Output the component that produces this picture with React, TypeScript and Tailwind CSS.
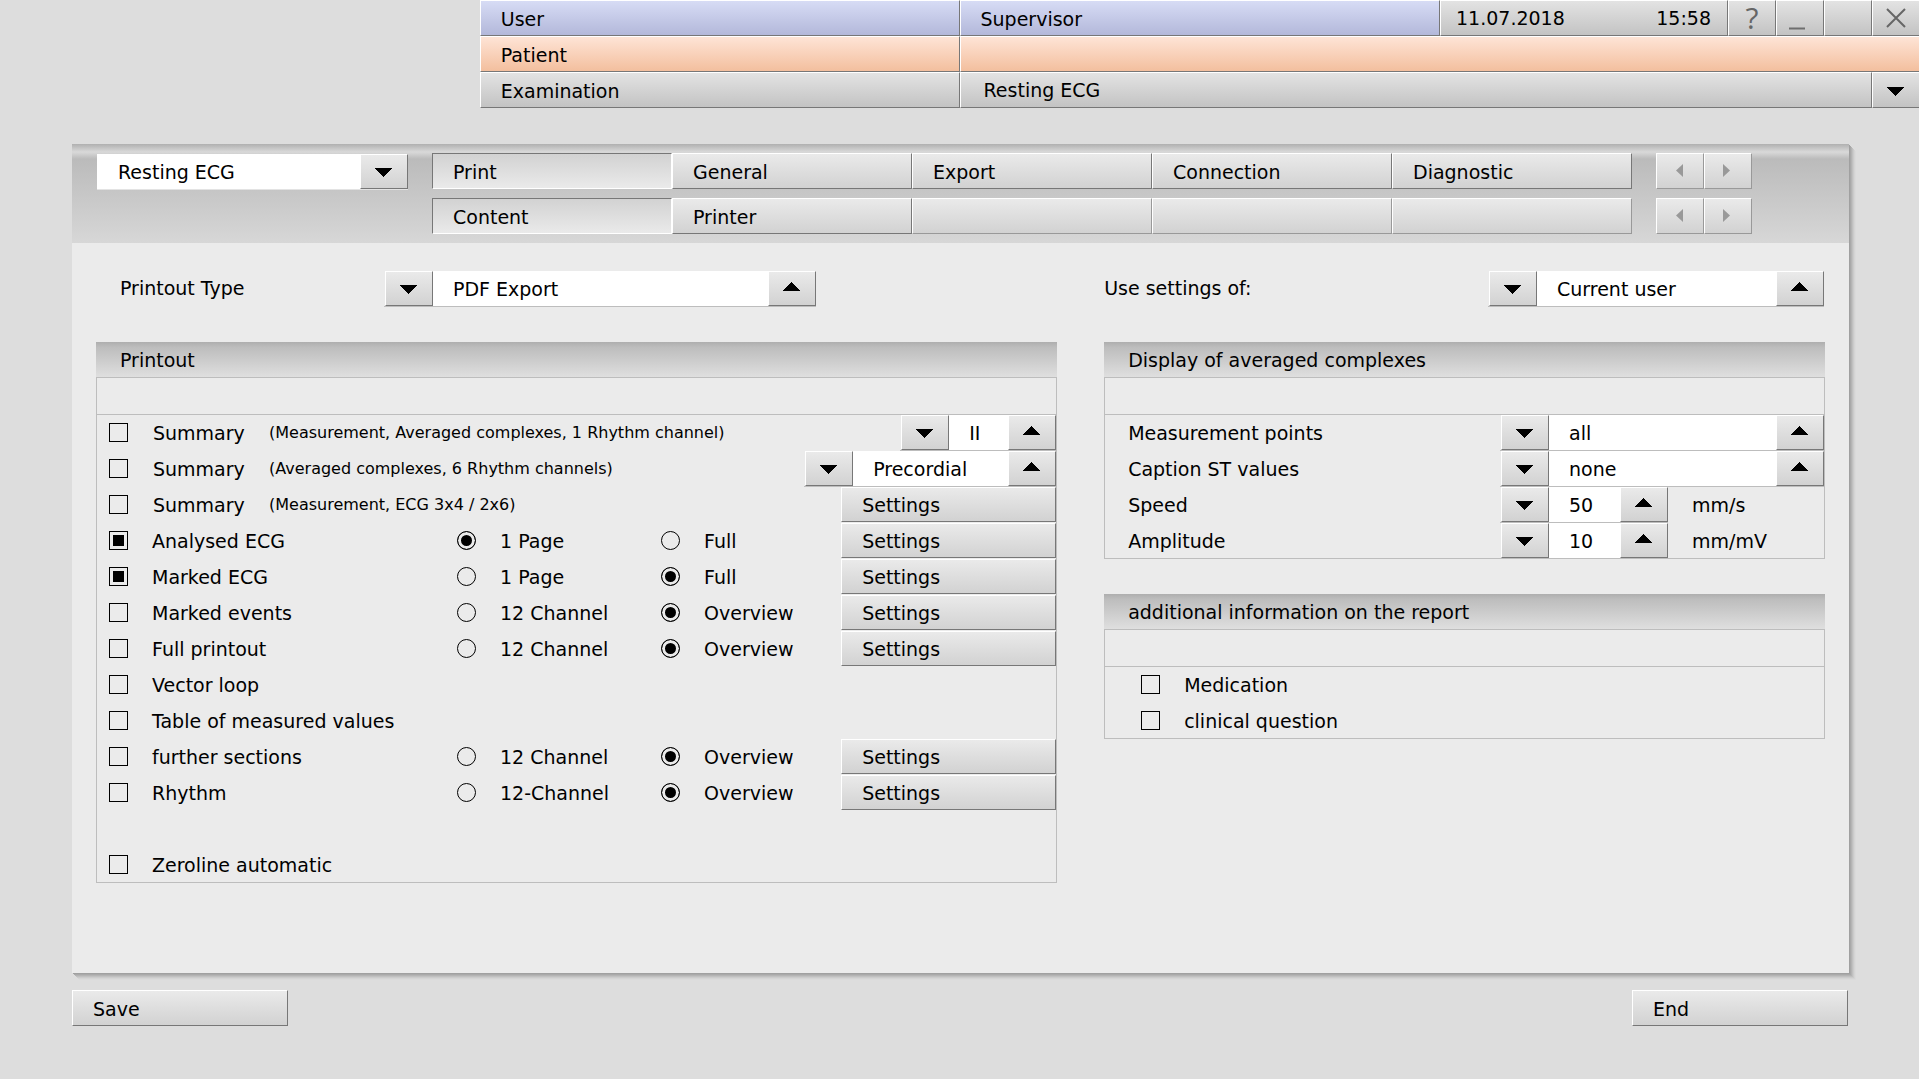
import { useState } from "react"
import type { ReactNode } from "react"
import clsx from "clsx"

const raised =
  "border border-t-white border-l-white border-r-[#777777] border-b-[#777777] bg-linear-to-b from-[#eaeaea] to-[#d2d2d2]"
const raisedDisabled =
  "border border-t-white border-l-white border-r-[#999999] border-b-[#999999] bg-linear-to-b from-[#eaeaea] to-[#d2d2d2]"
const sunken =
  "border border-t-[#777777] border-l-[#777777] border-r-white border-b-white bg-linear-to-b from-[#d2d2d2] to-[#eaeaea]"
const headerCell = "h-9 border border-t-white border-l-white border-r-[#777777] border-b-[#777777] bg-linear-to-b"
const greyCell = "from-[#e3e3e3] to-[#c3c3c3]"
const blueCell = "from-[#d7dcf5] to-[#b3b8da]"
const peachCell = "from-[#fee4d6] to-[#f3bf9e]"

const tabs = ["Print", "General", "Export", "Connection", "Diagnostic"]
const subTabs = ["Content", "Printer", "", "", ""]

type PrintRow = {
  id: string
  label: string
  note?: string
  checked?: boolean
  options?: string[]
  selected?: number
  stepper?: { value: string; wide: boolean }
  settings?: boolean
}

const printRows: PrintRow[] = [
  {
    id: "summary-1",
    label: "Summary",
    note: "(Measurement, Averaged complexes, 1 Rhythm channel)",
    stepper: { value: "II", wide: false },
  },
  {
    id: "summary-2",
    label: "Summary",
    note: "(Averaged complexes, 6 Rhythm channels)",
    stepper: { value: "Precordial", wide: true },
  },
  { id: "summary-3", label: "Summary", note: "(Measurement, ECG 3x4 / 2x6)", settings: true },
  { id: "analysed", label: "Analysed ECG", checked: true, options: ["1 Page", "Full"], selected: 0, settings: true },
  { id: "marked", label: "Marked ECG", checked: true, options: ["1 Page", "Full"], selected: 1, settings: true },
  { id: "events", label: "Marked events", options: ["12 Channel", "Overview"], selected: 1, settings: true },
  { id: "full", label: "Full printout", options: ["12 Channel", "Overview"], selected: 1, settings: true },
  { id: "vector", label: "Vector loop" },
  { id: "table", label: "Table of measured values" },
  { id: "sections", label: "further sections", options: ["12 Channel", "Overview"], selected: 1, settings: true },
  { id: "rhythm", label: "Rhythm", options: ["12-Channel", "Overview"], selected: 1, settings: true },
  { id: "spacer", label: "" },
  { id: "zeroline", label: "Zeroline automatic" },
]

function ArrowDown() {
  return (
    <svg width="17" height="9" viewBox="0 0 17 9" className="mt-0.5 mr-px" shapeRendering="crispEdges" aria-hidden="true">
      <path d="M0 0h17L8.5 9z" />
    </svg>
  )
}

function ArrowUp() {
  return (
    <svg width="17" height="9" viewBox="0 0 17 9" className="mr-px mb-1" shapeRendering="crispEdges" aria-hidden="true">
      <path d="M0 9h17L8.5 0z" />
    </svg>
  )
}

function PagerButtons({ name }: { name: string }) {
  return (
    <div className="flex w-24 shrink-0">
      <button disabled aria-label={`Previous ${name}`} className={clsx(raisedDisabled, "flex h-9 w-12 items-center justify-center")}>
        <svg width="7" height="13" viewBox="0 0 7 13" fill="#999999" className="mr-px mb-px" aria-hidden="true">
          <path d="M7 0v13L0 6.5z" />
        </svg>
      </button>
      <button disabled aria-label={`Next ${name}`} className={clsx(raisedDisabled, "flex h-9 w-12 items-center justify-center")}>
        <svg width="7" height="13" viewBox="0 0 7 13" fill="#999999" className="mr-1 mb-px" aria-hidden="true">
          <path d="M0 0v13l7-6.5z" />
        </svg>
      </button>
    </div>
  )
}

function Stepper({ label, value, className }: { label: string; value: string; className: string }) {
  return (
    <div className={clsx("flex h-9 shrink-0 border-b border-[#bdbdbd] pl-px", className)}>
      <button aria-label={`${label}: previous`} className={clsx(raised, "flex h-full w-12 shrink-0 items-center justify-center")}>
        <ArrowDown />
      </button>
      <input aria-label={label} defaultValue={value} className="h-full min-w-0 flex-1 bg-white pl-5 outline-none" />
      <button aria-label={`${label}: next`} className={clsx(raised, "flex h-full w-12 shrink-0 items-center justify-center")}>
        <ArrowUp />
      </button>
    </div>
  )
}

function CheckBox({ checked }: { checked?: boolean }) {
  return (
    <input
      type="checkbox"
      defaultChecked={checked}
      className="mb-px size-[19px] shrink-0 appearance-none border border-black checked:bg-black checked:shadow-[inset_0_0_0_3px_#ebebeb]"
    />
  )
}

function Radio({ name, label, checked }: { name: string; label: string; checked: boolean }) {
  return (
    <label className="flex w-[204px] shrink-0 items-center gap-6 nth-3:w-40">
      <input
        type="radio"
        name={name}
        defaultChecked={checked}
        className="mb-px size-[19px] shrink-0 appearance-none rounded-full border border-black checked:bg-black checked:shadow-[inset_0_0_0_3px_#ebebeb]"
      />
      {label}
    </label>
  )
}

function GroupBox({ title, children }: { title: string; children: ReactNode }) {
  return (
    <section>
      <h2 className="flex h-[35px] items-center bg-linear-to-b from-[#aeaeae] via-[#bdbdbd] via-15% to-[#dfdfdf] pt-px pl-6">
        {title}
      </h2>
      <div className="border border-[#bdbdbd]">
        <div className="h-[37px] border-b border-[#bdbdbd]" />
        {children}
      </div>
    </section>
  )
}

function PrintoutRow({ row }: { row: PrintRow }) {
  return (
    <div className="flex h-9 items-center last:h-[35px]">
      {row.label && (
        <label className={clsx("flex shrink-0 items-center pl-3", row.note ? "gap-[25px]" : "w-[360px] gap-6")}>
          <CheckBox checked={row.checked} />
          <span className={clsx(row.note && "w-[91px]")}>{row.label}</span>
          {row.note && <span className="text-[16px]">{row.note}</span>}
        </label>
      )}
      {row.options?.map((option, i) => (
        <Radio key={option} name={row.id} label={option} checked={row.selected === i} />
      ))}
      {row.stepper && (
        <Stepper
          label="Rhythm channel"
          value={row.stepper.value}
          className={row.stepper.wide ? "ml-auto w-[252px]" : "ml-auto w-[156px]"}
        />
      )}
      {row.settings && (
        <button className={clsx(raised, "mb-px ml-auto h-[35px] w-[215px] pt-px pl-5 text-left")}>Settings</button>
      )}
    </div>
  )
}

function TabRow({ items, name }: { items: string[]; name: string }) {
  const [active, setActive] = useState(0)

  return (
    <div className="flex gap-6">
      <div role="tablist" className="flex flex-1">
        {items.map((item, i) => (
          <button
            key={i}
            role="tab"
            aria-selected={active === i}
            disabled={!item}
            onClick={() => setActive(i)}
            className={clsx(
              "h-9 flex-1 basis-0 pt-0.5 pl-5 text-left",
              active === i ? sunken : item ? raised : raisedDisabled,
            )}
          >
            {item}
          </button>
        ))}
      </div>
      <PagerButtons name={name} />
    </div>
  )
}

export default function App() {
  return (
    <div className="flex min-h-screen flex-col bg-[#dddddd] font-['DejaVu_Sans',Verdana,sans-serif] text-[19px] leading-6 text-black">
      {/* Title bar */}
      <header className="ml-auto w-3/4">
        <div className="flex">
          <div className={clsx(headerCell, blueCell, "w-1/3 pt-1.5 pl-5")}>User</div>
          <div className={clsx(headerCell, blueCell, "flex-1 pt-1.5 pl-5")}>Supervisor</div>
          <div className={clsx(headerCell, greyCell, "flex w-72 justify-between pt-[5px] pr-4 pl-[15px]")}>
            <span>11.07.2018</span>
            <span>15:58</span>
          </div>
          <button
            aria-label="Help"
            className={clsx(headerCell, greyCell, "w-12 font-['Open_Sans',sans-serif] text-[30px] leading-8 text-[#666666]")}
          >
            ?
          </button>
          <button aria-label="Minimize" className={clsx(headerCell, greyCell, "flex w-12 justify-center pt-[26px] pr-1.5")}>
            <svg width="16" height="3" viewBox="0 0 16 3" aria-hidden="true">
              <path d="M0 1.5h16" stroke="#6e6e6e" strokeWidth="2" />
            </svg>
          </button>
          <button disabled aria-label="Restore" className={clsx(headerCell, greyCell, "w-12")} />
          <button aria-label="Close" className={clsx(headerCell, greyCell, "flex w-[47px] items-center justify-center border-r-0")}>
            <svg width="20" height="20" viewBox="0 0 20 20" className="mr-px" aria-hidden="true">
              <path d="M1 1l18 18M19 1L1 19" stroke="#666666" strokeWidth="2" />
            </svg>
          </button>
        </div>
        <div className="flex">
          <div className={clsx(headerCell, peachCell, "w-1/3 pt-1.5 pl-5")}>Patient</div>
          <div className={clsx(headerCell, peachCell, "flex-1 border-r-0")} />
        </div>
        <div className="flex">
          <div className={clsx(headerCell, greyCell, "w-1/3 pt-1.5 pl-5")}>Examination</div>
          <div className={clsx(headerCell, greyCell, "flex-1 pt-[5px] pl-[23px]")}>Resting ECG</div>
          <button
            aria-label="Choose examination"
            className={clsx(headerCell, greyCell, "flex w-[47px] items-center justify-center border-r-0")}
          >
            <ArrowDown />
          </button>
        </div>
      </header>

      {/* Settings panel */}
      <main className="mt-9 mr-[70px] ml-[72px] flex-1 bg-[#ebebeb] shadow-[1px_1px_0_#a0a0a0,2px_2px_0_#a9a9a9,3px_3px_0_#b4b4b4,4px_4px_0_#c0c0c0,5px_5px_0_#cbcbcb,6px_6px_0_#d4d4d4,7px_7px_0_#dadada]">
        <div className="flex gap-6 bg-[linear-gradient(to_bottom,#b0b0b0_0px,#d9d9d9_8px,#bbbbbb_15px,#d7d7d7_99px)] pt-[9px] pr-[97px] pb-[9px] pl-[25px]">
          <div className="mt-px flex h-9 w-[311px] shrink-0 border-b border-[#e3e3e3]">
            <select aria-label="Module" className="h-full flex-1 appearance-none bg-white pl-[21px] outline-none">
              <option>Resting ECG</option>
            </select>
            <button aria-label="Open module list" className={clsx(raised, "flex h-full w-12 items-center justify-center")}>
              <ArrowDown />
            </button>
          </div>
          <div className="flex flex-1 flex-col gap-[9px]">
            <TabRow items={tabs} name="tab" />
            <TabRow items={subTabs} name="page" />
          </div>
        </div>

        <div className="grid grid-cols-[minmax(0,4fr)_minmax(0,3fr)] gap-x-[47px] gap-y-[35px] px-6 pt-7">
          <div className="flex items-center pl-6">
            <span className="w-[264px] pb-0.5">Printout Type</span>
            <Stepper label="Printout Type" value="PDF Export" className="w-[432px]" />
          </div>
          <div className="flex items-center justify-between pr-px">
            <span className="pb-0.5">Use settings of:</span>
            <Stepper label="Use settings of" value="Current user" className="w-[336px]" />
          </div>

          <GroupBox title="Printout">
            {printRows.map((row) => (
              <PrintoutRow key={row.id} row={row} />
            ))}
          </GroupBox>

          <div className="flex flex-col gap-[35px]">
            <GroupBox title="Display of averaged complexes">
              <div className="flex h-9 items-center justify-between pl-[23px]">
                Measurement points
                <Stepper label="Measurement points" value="all" className="w-[324px]" />
              </div>
              <div className="flex h-9 items-center justify-between pl-[23px]">
                Caption ST values
                <Stepper label="Caption ST values" value="none" className="w-[324px]" />
              </div>
              <div className="flex h-9 items-center justify-between pl-[23px]">
                Speed
                <div className="flex w-[324px] items-center gap-6">
                  <Stepper label="Speed" value="50" className="w-[168px]" />
                  mm/s
                </div>
              </div>
              <div className="flex h-[35px] items-start justify-between pl-[23px]">
                <span className="pt-1.5">Amplitude</span>
                <div className="flex w-[324px] items-center gap-6">
                  <Stepper label="Amplitude" value="10" className="w-[168px]" />
                  mm/mV
                </div>
              </div>
            </GroupBox>

            <GroupBox title="additional information on the report">
              <label className="flex h-9 items-center gap-6 pl-9">
                <CheckBox />
                Medication
              </label>
              <label className="flex h-[35px] items-center gap-6 pl-9">
                <CheckBox />
                clinical question
              </label>
            </GroupBox>
          </div>
        </div>
      </main>

      <footer className="mt-[17px] mr-[71px] mb-[53px] ml-[72px] flex justify-between">
        <button className={clsx(raised, "h-9 w-[216px] pt-0.5 pl-5 text-left")}>Save</button>
        <button className={clsx(raised, "h-9 w-[216px] pt-0.5 pl-5 text-left")}>End</button>
      </footer>
    </div>
  )
}
